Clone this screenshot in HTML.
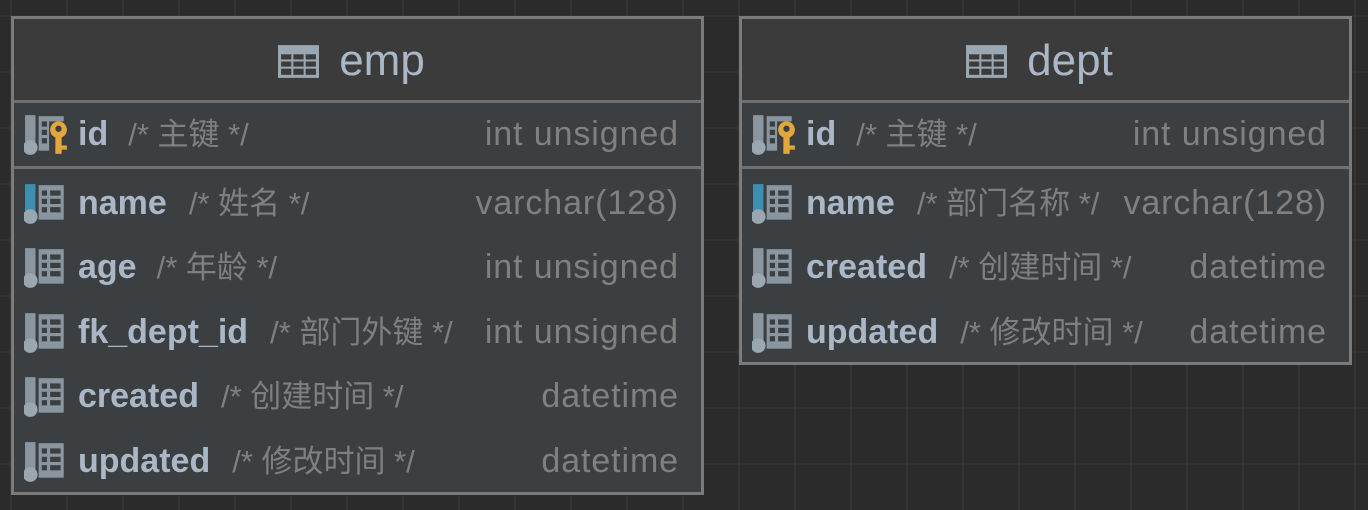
<!DOCTYPE html>
<html><head><meta charset="utf-8"><style>
body{margin:0;width:1368px;height:510px;overflow:hidden;background:#2b2b2b;
background-image:linear-gradient(#333 2px,transparent 2px),linear-gradient(90deg,#333 2px,transparent 2px);
background-size:56px 56px;background-position:10px 15px;font-family:"Liberation Sans","Noto Sans CJK SC",sans-serif;position:relative}
.t{position:absolute;border:3px solid #7b7b7b;background:#3c3f41;box-sizing:border-box}
.h{height:81px;background:#3b3b3b;border-bottom:3px solid #6f6f6f;box-sizing:content-box;text-align:center;color:#a9b7c6;font-size:44px;line-height:84px;padding-right:12px}
.h svg{vertical-align:-3px;margin-right:20px}
.r{position:absolute;left:0;right:0;height:64px;}
.r svg{position:absolute;left:10px;top:12px}
.n{position:absolute;left:64px;top:10px;font-weight:bold;color:#a9b7c6;font-size:34px;line-height:42px;white-space:nowrap}
.c{color:#7f7f7f;font-weight:normal;font-size:31px;margin-left:20px}
.ty{position:absolute;right:22px;top:10px;color:#808080;font-size:34px;line-height:42px;letter-spacing:0.9px}
.sep{position:absolute;left:0;right:0;height:3px;background:#6f6f6f}
</style></head><body>
<svg width="0" height="0" style="position:absolute"><defs>
<symbol id="col" viewBox="0 0 44 38"><rect x="1" y="0" width="10" height="26" fill="#8a969f"/><circle cx="6" cy="31" r="7" fill="#9aa7b0"/><rect x="14" y="1" width="24" height="33" fill="#8a969f"/><g fill="#3c3f41"><rect x="17" y="6" width="5" height="5"/><rect x="25" y="6" width="10" height="5"/><rect x="17" y="14" width="5" height="5"/><rect x="25" y="14" width="10" height="5"/><rect x="17" y="22" width="5" height="5"/><rect x="25" y="22" width="10" height="5"/></g></symbol>
<symbol id="colb" viewBox="0 0 44 38"><rect x="1" y="0" width="10" height="26" fill="#3c8fb0"/><circle cx="6" cy="31" r="7" fill="#9aa7b0"/><rect x="14" y="1" width="24" height="33" fill="#8a969f"/><g fill="#3c3f41"><rect x="17" y="6" width="5" height="5"/><rect x="25" y="6" width="10" height="5"/><rect x="17" y="14" width="5" height="5"/><rect x="25" y="14" width="10" height="5"/><rect x="17" y="22" width="5" height="5"/><rect x="25" y="22" width="10" height="5"/></g></symbol>
<symbol id="key" viewBox="0 0 44 38"><rect x="1" y="0" width="10" height="26" fill="#8a969f"/><circle cx="6" cy="31" r="7" fill="#9aa7b0"/><rect x="14" y="1" width="24" height="33" fill="#8a969f"/><g fill="#3c3f41"><rect x="17" y="6" width="5" height="5"/><rect x="17" y="14" width="5" height="5"/><rect x="17" y="22" width="5" height="5"/><rect x="24" y="6" width="16" height="30"/></g><circle cx="33" cy="14" r="8" fill="#e3a83c"/><circle cx="33" cy="13" r="3" fill="#3c3f41"/><rect x="30" y="19" width="6" height="18" fill="#e3a83c"/><rect x="35" y="29" width="6" height="4" fill="#e3a83c"/></symbol>
<symbol id="tbl" viewBox="0 0 40 32"><rect x="0" y="0" width="40" height="32" fill="#9aa7b0"/><g fill="#3b3b3b"><rect x="3" y="9" width="10" height="5"/><rect x="15" y="9" width="10" height="5"/><rect x="27" y="9" width="10" height="5"/><rect x="3" y="16" width="10" height="5"/><rect x="15" y="16" width="10" height="5"/><rect x="27" y="16" width="10" height="5"/><rect x="3" y="23" width="10" height="6"/><rect x="15" y="23" width="10" height="6"/><rect x="27" y="23" width="10" height="6"/></g></symbol>
</defs></svg>

<div class="t" style="left:11px;top:16px;width:693px;height:479px">
<div class="h"><svg width="41" height="33"><use href="#tbl" width="41" height="33"/></svg>emp</div>
<div class="r" style="top:84px"><svg width="46" height="40"><use href="#key" width="46" height="40"/></svg><div class="n">id<span class="c">/* 主键 */</span></div><div class="ty">int unsigned</div></div>
<div class="sep" style="top:147px"></div>
<div class="r" style="top:153px"><svg width="46" height="40"><use href="#colb" width="46" height="40"/></svg><div class="n">name<span class="c" style="margin-left:22px">/* 姓名 */</span></div><div class="ty">varchar(128)</div></div>
<div class="r" style="top:217px"><svg width="46" height="40"><use href="#col" width="46" height="40"/></svg><div class="n">age<span class="c">/* 年龄 */</span></div><div class="ty">int unsigned</div></div>
<div class="r" style="top:282px"><svg width="46" height="40"><use href="#col" width="46" height="40"/></svg><div class="n">fk_dept_id<span class="c" style="margin-left:22px">/* 部门外键 */</span></div><div class="ty">int unsigned</div></div>
<div class="r" style="top:346px"><svg width="46" height="40"><use href="#col" width="46" height="40"/></svg><div class="n">created<span class="c" style="margin-left:22px">/* 创建时间 */</span></div><div class="ty">datetime</div></div>
<div class="r" style="top:411px"><svg width="46" height="40"><use href="#col" width="46" height="40"/></svg><div class="n">updated<span class="c" style="margin-left:22px">/* 修改时间 */</span></div><div class="ty">datetime</div></div>
</div>

<div class="t" style="left:739px;top:16px;width:613px;height:349px">
<div class="h"><svg width="41" height="33"><use href="#tbl" width="41" height="33"/></svg>dept</div>
<div class="r" style="top:84px"><svg width="46" height="40"><use href="#key" width="46" height="40"/></svg><div class="n">id<span class="c">/* 主键 */</span></div><div class="ty">int unsigned</div></div>
<div class="sep" style="top:147px"></div>
<div class="r" style="top:153px"><svg width="46" height="40"><use href="#colb" width="46" height="40"/></svg><div class="n">name<span class="c" style="margin-left:22px">/* 部门名称 */</span></div><div class="ty">varchar(128)</div></div>
<div class="r" style="top:217px"><svg width="46" height="40"><use href="#col" width="46" height="40"/></svg><div class="n">created<span class="c" style="margin-left:22px">/* 创建时间 */</span></div><div class="ty">datetime</div></div>
<div class="r" style="top:282px"><svg width="46" height="40"><use href="#col" width="46" height="40"/></svg><div class="n">updated<span class="c" style="margin-left:22px">/* 修改时间 */</span></div><div class="ty">datetime</div></div>
</div>
</body></html>
